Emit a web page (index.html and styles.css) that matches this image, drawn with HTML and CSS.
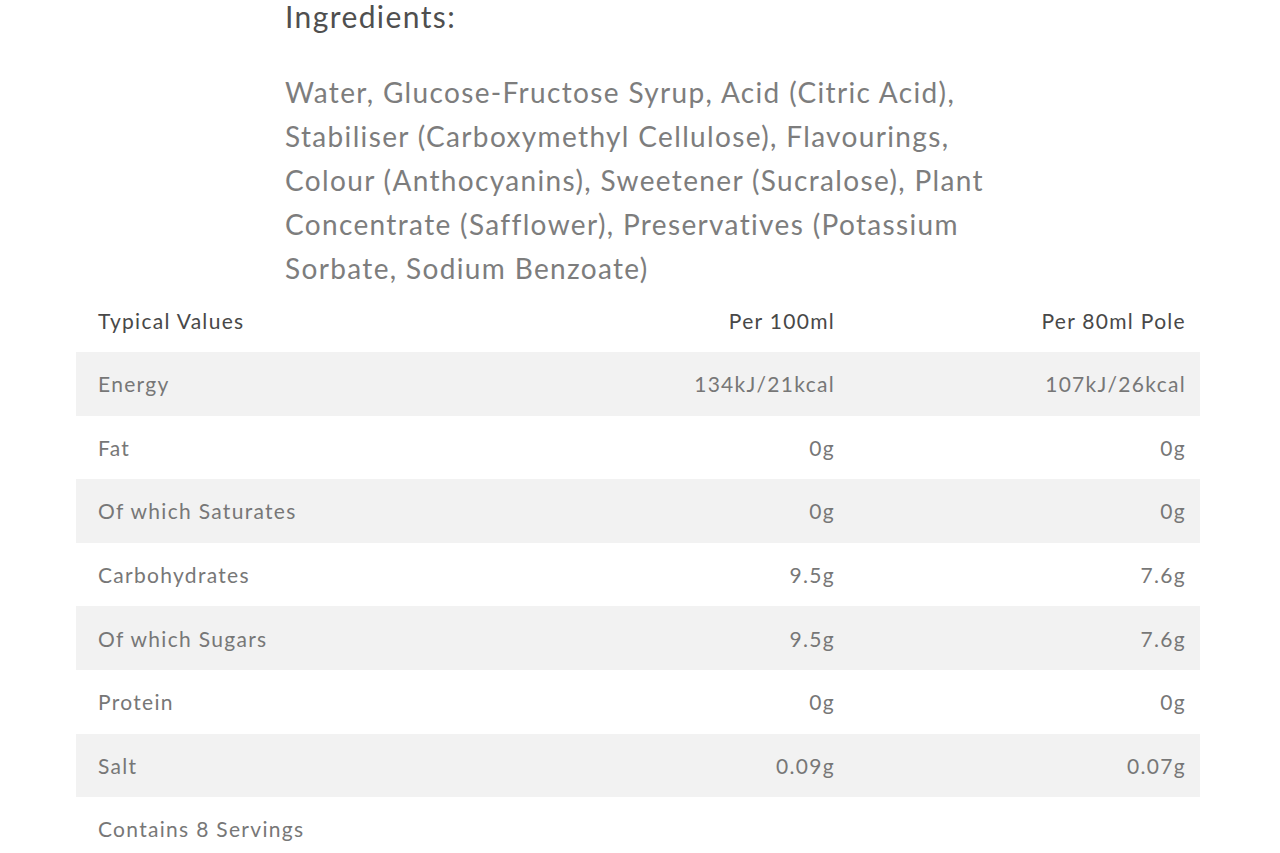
FILE: index.html
```html
<!DOCTYPE html>
<html lang="en">
<head>
<meta charset="utf-8">
<title>Nutrition</title>
<link rel="stylesheet" href="styles.css">
</head>
<body>
<section class="ingredients">
  <h2 class="ing-title">Ingredients:</h2>
  <p class="ing-text">Water, Glucose-Fructose Syrup, Acid (Citric Acid), Stabiliser (Carboxymethyl Cellulose), Flavourings, Colour (Anthocyanins), Sweetener (Sucralose), Plant Concentrate (Safflower), Preservatives (Potassium Sorbate, Sodium Benzoate)</p>
</section>
<div class="nutrition">
  <div class="row head"><span>Typical Values</span><span class="num">Per 100ml</span><span class="num">Per 80ml Pole</span></div>
  <div class="row alt"><span>Energy</span><span class="num">134kJ/21kcal</span><span class="num">107kJ/26kcal</span></div>
  <div class="row"><span>Fat</span><span class="num">0g</span><span class="num">0g</span></div>
  <div class="row alt"><span>Of which Saturates</span><span class="num">0g</span><span class="num">0g</span></div>
  <div class="row"><span>Carbohydrates</span><span class="num">9.5g</span><span class="num">7.6g</span></div>
  <div class="row alt"><span>Of which Sugars</span><span class="num">9.5g</span><span class="num">7.6g</span></div>
  <div class="row"><span>Protein</span><span class="num">0g</span><span class="num">0g</span></div>
  <div class="row alt"><span>Salt</span><span class="num">0.09g</span><span class="num">0.07g</span></div>
  <div class="row foot"><span>Contains 8 Servings</span></div>
</div>
</body>
</html>
```
FILE: styles.css
```css
html, body {
  margin: 0;
  padding: 0;
  background: #ffffff;
}
body {
  font-family: Lato, "Open Sans", "Liberation Sans", sans-serif;
  color: #7a7a7a;
}
.ingredients {
  padding-left: 285px;
  width: 720px;
}
.ing-title {
  margin: 0;
  font-size: 30px;
  line-height: 32px;
  font-weight: 400;
  letter-spacing: 1.4px;
  color: #4f4f4f;
}
.ing-text {
  margin: 38px 0 0 0;
  font-size: 28px;
  line-height: 44px;
  letter-spacing: 1.35px;
  color: #7d7d7d;
}
.nutrition {
  margin: 0 80px 0 76px;
  width: 1124px;
}
.row {
  display: grid;
  grid-template-columns: 1fr 400px 351px;
  align-items: center;
  height: 63.6px;
  font-size: 21px;
  letter-spacing: 1.3px;
  color: #777777;
}
.row span {
  padding: 0 14px 0 22px;
}
.row .num {
  text-align: right;
}
.row.head {
  color: #484848;
  height: 60px;
  margin-bottom: 2px;
}
.row.alt {
  background: #f2f2f2;
}
```
